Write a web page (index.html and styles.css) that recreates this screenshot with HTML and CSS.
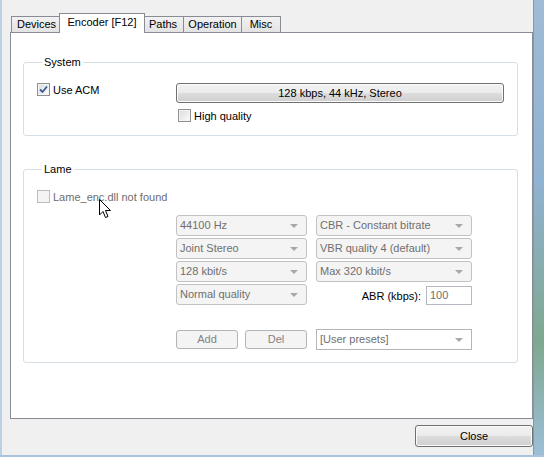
FILE: index.html
```html
<!DOCTYPE html>
<html>
<head>
<meta charset="utf-8">
<link rel="stylesheet" href="styles.css">
</head>
<body>
<div class="frame">
  <div class="window">
    <div class="tabs">
      <div class="tab t-devices">Devices</div>
      <div class="tab sel t-encoder">Encoder [F12]</div>
      <div class="tab t-paths">Paths</div>
      <div class="tab t-operation">Operation</div>
      <div class="tab t-misc">Misc</div>
    </div>
    <div class="panel">
      <fieldset class="group sys">
        <legend>System</legend>
        <div class="sys-grid">
          <label class="check">
            <span class="box checked"><svg width="9" height="9" viewBox="0 0 9 9"><path d="M1 4.5 L3.5 7 L8 1.5" fill="none" stroke="#3b5a9c" stroke-width="1.8"/></svg></span>
            <span>Use ACM</span>
          </label>
          <button class="btn fmt">128 kbps, 44 kHz, Stereo</button>
          <span></span>
          <label class="check hq">
            <span class="box"></span>
            <span>High quality</span>
          </label>
        </div>
      </fieldset>
      <fieldset class="group lame">
        <legend>Lame</legend>
        <label class="check disabled">
          <span class="box dis"></span>
          <span>Lame_enc.dll not found</span>
        </label>
        <div class="combos">
          <div class="combo">44100 Hz<i></i></div>
          <div class="combo">CBR - Constant bitrate<i></i></div>
          <div class="combo">Joint Stereo<i></i></div>
          <div class="combo">VBR quality 4 (default)<i></i></div>
          <div class="combo">128 kbit/s<i></i></div>
          <div class="combo">Max 320 kbit/s<i></i></div>
          <div class="combo">Normal quality<i></i></div>
          <div class="abr"><span>ABR (kbps):</span><div class="edit">100</div></div>
        </div>
        <div class="presets">
          <div class="pbtns">
            <div class="dbtn">Add</div>
            <div class="dbtn">Del</div>
          </div>
          <div class="combo white">[User presets]<i></i></div>
        </div>
      </fieldset>
      <svg class="cursor" width="13" height="20" viewBox="0 0 13 20"><path d="M0.5 0.5 L0.5 16 L4 12.5 L6.5 18.5 L9 17.5 L6.5 11.5 L11.5 11.5 Z" fill="#fff" stroke="#000" stroke-width="1" stroke-linejoin="miter"/></svg>
    </div>
    <div class="footer">
      <button class="btn close">Close</button>
    </div>
  </div>
  <div class="glass"></div>
</div>
</body>
</html>
```
FILE: styles.css
```css
html, body {
  margin: 0;
  padding: 0;
}
body {
  width: 544px;
  height: 457px;
  overflow: hidden;
  background: #f0f0f0;
  font-family: "Liberation Sans", Arial, sans-serif;
  font-size: 11px;
  color: #000;
}
.frame {
  display: flex;
  height: 455px;
  border-bottom: 2px solid #a9c3dd;
}
.window {
  width: 534px;
  border-left: 2px solid #bcd0e4;
  padding: 13px 0 0 8px;
  box-sizing: border-box;
  border-right: 1px solid #8a96a4;
}
.glass {
  flex: 1;
  background: linear-gradient(180deg, #9fbbd6 0%, #8fb3d2 40%, #7fa88f 75%, #9cbfd8 100%);
}
.tabs {
  display: flex;
  align-items: flex-end;
  height: 19px;
  padding-left: 1px;
  position: relative;
  z-index: 2;
}
.tab {
  height: 15px;
  line-height: 14px;
  border: 1px solid #898c95;
  border-bottom: none;
  margin-right: -1px;
  background: linear-gradient(#f2f2f2, #e3e3e3);
  text-align: center;
  box-sizing: content-box;
}
.t-devices { width: 49px; }
.t-encoder { width: 80px; }
.t-paths { width: 40px; }
.t-operation { width: 57px; }
.t-misc { width: 38px; }
.tab.sel {
  height: 19px;
  line-height: 17px;
  background: #fff;
  margin-left: -2px;
  margin-right: -3px;
  padding: 0 2px;
  margin-bottom: -1px;
  position: relative;
  z-index: 3;
}
.panel {
  position: relative;
  width: 523px;
  height: 387px;
  box-sizing: border-box;
  border: 1px solid #898c95;
  background: #fff;
  padding: 22px 14px 0 12px;
}
.group {
  margin: 0;
  border: 1px solid #d5dfe5;
  border-radius: 3px;
  padding: 14px 0 13px 13px;
  min-width: 0;
}
.group legend {
  padding: 0 2px;
  margin-left: 5px;
  line-height: 14px;
}
.lame {
  margin-top: 26px;
  padding-bottom: 12px;
}
.sys-grid {
  display: grid;
  grid-template-columns: 139px 328px;
  row-gap: 6px;
  align-items: start;
}
.check {
  display: flex;
  align-items: center;
  gap: 3px;
  height: 13px;
  line-height: 13px;
}
.check > span:last-child { padding-top: 1px; }
.hq { padding-left: 2px; }
.box {
  width: 11px;
  height: 11px;
  border: 1px solid #8f8f8f;
  background: linear-gradient(135deg, #dcdcdc, #fbfbfb);
  box-shadow: inset 0 0 0 1px #f4f4f4;
  display: flex;
  align-items: center;
  justify-content: center;
  flex: none;
}
.box.dis {
  border-color: #bcbcbc;
  background: #f4f4f4;
  box-shadow: none;
}
.disabled { color: #6d6d6d; }
.btn {
  font: inherit;
  color: #000;
  border: 1px solid #707070;
  border-radius: 3px;
  background: linear-gradient(#f2f2f2 0%, #ebebeb 50%, #dddddd 50%, #cfcfcf 100%);
  padding: 0;
  margin: 0;
  box-shadow: inset 0 0 0 1px #fbfbfb;
}
.fmt {
  height: 20px;
  width: 328px;
}
.combos {
  display: grid;
  grid-template-columns: 131px 156px;
  column-gap: 9px;
  row-gap: 2px;
  margin: 12px 0 0 139px;
}
.combo {
  position: relative;
  height: 21px;
  box-sizing: border-box;
  border: 1px solid #c2c2c2;
  border-radius: 3px;
  background: #f4f4f4;
  color: #6f6f6f;
  line-height: 19px;
  padding-left: 3px;
  white-space: nowrap;
}
.combo i {
  position: absolute;
  right: 8px;
  top: 8px;
  width: 0;
  height: 0;
  border-left: 4px solid transparent;
  border-right: 4px solid transparent;
  border-top: 4px solid #a8a8a8;
}
.combo.white {
  background: #fff;
  border-radius: 0;
  border-color: #b5b5b5;
}
.abr {
  display: flex;
  justify-content: flex-end;
  align-items: center;
  gap: 5px;
  height: 21px;
}
.abr span { padding-top: 3px; }
.edit {
  width: 46px;
  height: 19px;
  box-sizing: border-box;
  border: 1px solid #b5b9c2;
  background: #fff;
  color: #6f6f6f;
  line-height: 17px;
  padding-left: 3px;
  margin-top: 2px;
}
.presets {
  display: grid;
  grid-template-columns: 131px 156px;
  column-gap: 9px;
  margin: 24px 0 0 139px;
  align-items: center;
}
.pbtns {
  display: flex;
  gap: 7px;
}
.dbtn {
  width: 63px;
  height: 19px;
  box-sizing: border-box;
  border: 1px solid #b1b5b8;
  border-radius: 3px;
  background: #f4f4f4;
  color: #838383;
  text-align: center;
  line-height: 17px;
}
.cursor {
  position: absolute;
  left: 88px;
  top: 166px;
}
.footer {
  display: flex;
  justify-content: flex-end;
  width: 523px;
  padding-top: 6px;
}
.close {
  width: 118px;
  height: 22px;
}
```
